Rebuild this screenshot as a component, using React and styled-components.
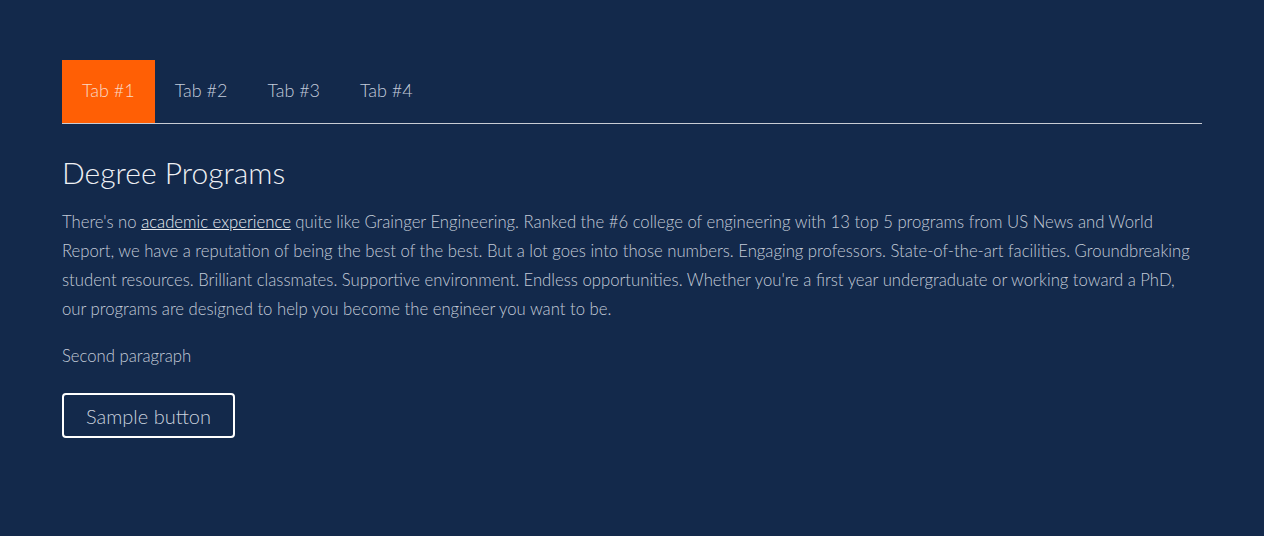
import React, { useState } from "react";
import styled, { createGlobalStyle } from "styled-components";

const navy = "#13294b";
const orange = "#ff5f05";

const GlobalStyle = createGlobalStyle`
  html, body {
    margin: 0;
    padding: 0;
    background: ${navy};
  }
  body {
    font-family: "Lato", "Open Sans", sans-serif;
    font-weight: 300;
  }
`;

// Fondo de la página
const Page = styled.div`
  min-height: 536px;
  background: ${navy};
  padding: 60px 62px 0;
  box-sizing: border-box;
`;

// Contenedor de pestañas
const TabList = styled.div`
  display: flex;
  border-bottom: 1px solid #c8ccd4;
`;

const Tab = styled.button`
  height: 63px;
  padding: 0 20px 3px;
  border: none;
  margin: 0;
  background: ${(p) => (p.$active ? orange : "transparent")};
  color: ${(p) => (p.$active ? "#fbd9c6" : "#c3ccdb")};
  font-family: inherit;
  font-weight: 300;
  font-size: 18px;
  cursor: pointer;
`;

const Panel = styled.div`
  padding-top: 28px;
`;

const Heading = styled.h2`
  margin: 0 0 16px;
  font-size: 30px;
  font-weight: 300;
  line-height: 40px;
  color: #eef0f4;
`;

const Paragraph = styled.p`
  margin: 0 0 18px;
  font-size: 16.7px;
  line-height: 29px;
  color: #c3cbd8;
`;

const Link = styled.a`
  color: #e8ebf0;
  text-decoration: underline;
`;

const Button = styled.button`
  margin-top: 4px;
  height: 45px;
  padding: 0 22px;
  border: 2px solid #ffffff;
  border-radius: 4px;
  background: transparent;
  color: #c9d1dd;
  font-family: inherit;
  font-weight: 300;
  font-size: 20px;
  cursor: pointer;
`;

const tabs = ["Tab #1", "Tab #2", "Tab #3", "Tab #4"];

const App = () => {
  const [active, setActive] = useState(0);

  return (
    <>
      <GlobalStyle />
      <Page>
        <TabList>
          {tabs.map((t, i) => (
            <Tab key={t} $active={i === active} onClick={() => setActive(i)}>
              {t}
            </Tab>
          ))}
        </TabList>
        <Panel>
          <Heading>Degree Programs</Heading>
          <Paragraph>
            There's no <Link href="#">academic experience</Link> quite like
            Grainger Engineering. Ranked the #6 college of engineering with 13
            top 5 programs from US News and World Report, we have a reputation
            of being the best of the best. But a lot goes into those numbers.
            Engaging professors. State-of-the-art facilities. Groundbreaking
            student resources. Brilliant classmates. Supportive environment.
            Endless opportunities. Whether you're a first year undergraduate or
            working toward a PhD, our programs are designed to help you become
            the engineer you want to be.
          </Paragraph>
          <Paragraph>Second paragraph</Paragraph>
          <Button>Sample button</Button>
        </Panel>
      </Page>
    </>
  );
};

export default App;
